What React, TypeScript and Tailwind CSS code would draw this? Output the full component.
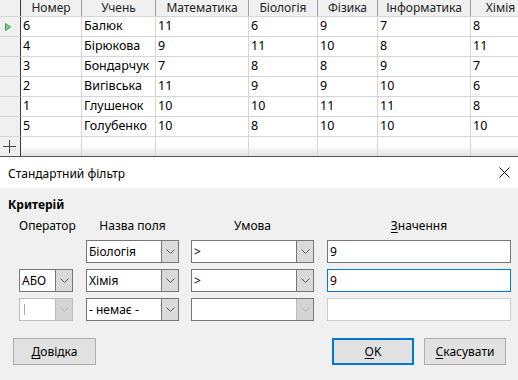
import React from "react"

const cols = [
  { name: "Номер", w: 61 },
  { name: "Учень", w: 74 },
  { name: "Математика", w: 93 },
  { name: "Біологія", w: 69 },
  { name: "Фізика", w: 60 },
  { name: "Інформатика", w: 93 },
  { name: "Хімія", w: 60 },
]

const rows = [
  ["6", "Балюк", "11", "6", "9", "7", "8"],
  ["4", "Бірюкова", "9", "11", "10", "8", "11"],
  ["3", "Бондарчук", "7", "8", "8", "9", "7"],
  ["2", "Вигівська", "11", "9", "9", "10", "6"],
  ["1", "Глушенок", "10", "10", "11", "11", "8"],
  ["5", "Голубенко", "10", "8", "10", "10", "10"],
]

function Chevron({ light }: { light?: boolean }) {
  return (
    <svg width="9" height="5" viewBox="0 0 9 5">
      <path d="M0.5 0.5 L4.5 4.5 L8.5 0.5" fill="none" stroke={light ? "#b5b5b5" : "#5a5a5a"} strokeWidth="1" />
    </svg>
  )
}

function Combo({ w, text, disabled, cursor, lightBorder }: { w: number; text?: string; disabled?: boolean; cursor?: boolean; lightBorder?: boolean }) {
  return (
    <div
      className={`flex h-[23px] bg-white border ${lightBorder ? "border-[#bcbcbc]" : "border-[#767676]"}`}
      style={{ width: w }}
    >
      <div className="flex-1 flex items-center pl-[2px] text-[12px] text-black whitespace-nowrap overflow-hidden">
        {cursor && <span className="ml-[2px] w-px h-[11px] bg-[#c89a9a]" />}
        {text}
      </div>
      <div
        className={`w-[17px] flex items-center justify-center border-l ${
          disabled ? "bg-[#d4d4d4] border-[#bcbcbc]" : "bg-[#dadada] border-[#767676]"
        }`}
      >
        <Chevron light={disabled} />
      </div>
    </div>
  )
}

function Field({ value, focused, disabled }: { value?: string; focused?: boolean; disabled?: boolean }) {
  return (
    <div
      className={`w-[184px] h-[23px] bg-white flex items-center pl-[2px] text-[12px] border ${
        focused ? "border-[#0078d7]" : disabled ? "border-[#cccccc]" : "border-[#767676]"
      }`}
    >
      {value}
    </div>
  )
}

function Btn({ w, first, rest, primary }: { w: number; first: string; rest: string; primary?: boolean }) {
  return (
    <div
      className={`h-[27px] flex items-center justify-center bg-[#e1e1e1] text-[12px] text-black ${
        primary ? "border-2 border-[#0078d7]" : "border border-[#adadad]"
      }`}
      style={{ width: w }}
    >
      <span className="underline underline-offset-2">{first}</span>
      {rest}
    </div>
  )
}

export default function App() {
  return (
    <div className="w-[518px] h-[380px] overflow-hidden bg-white flex flex-col" style={{ fontFamily: '"Noto Sans", "Open Sans", sans-serif' }}>
      {/* spreadsheet */}
      <div className="h-[157px] flex flex-col border-b border-[#555] shrink-0">
        <div className="flex h-[17px] bg-[#f0f0f0] border-b border-[#d6d6d6]">
          <div className="w-[21px] shrink-0 border-r border-[#3a3a3a]" />
          {cols.map((c) => (
            <div
              key={c.name}
              className="shrink-0 flex items-center justify-center text-[12px] text-[#222] border-r border-[#a0a0a0]"
              style={{ width: c.w }}
            >
              {c.name}
            </div>
          ))}
        </div>
        {rows.map((r, i) => (
          <div key={i} className="flex h-[20px]">
            <div className="w-[21px] shrink-0 bg-[#f0f0f0] border-r border-[#3a3a3a] border-b border-b-[#d6d6d6] flex items-center justify-center">
              {i === 0 && (
                <svg width="6" height="8" viewBox="0 0 6 8" className="-ml-[4px]">
                  <path d="M0.5 0.5 L5.5 4 L0.5 7.5 Z" fill="#7fd08a" stroke="#3f9f55" strokeWidth="1" />
                </svg>
              )}
            </div>
            {r.map((v, j) => (
              <div
                key={j}
                className="shrink-0 flex items-center pl-[2px] text-[12.5px] text-black border-r border-b border-[#d6d6d6] whitespace-nowrap overflow-hidden"
                style={{ width: cols[j].w }}
              >
                {v}
              </div>
            ))}
          </div>
        ))}
        <div className="flex flex-1">
          <div className="w-[21px] shrink-0 bg-[#f0f0f0] border-r border-[#3a3a3a] flex items-center justify-center">
            <svg width="13" height="13" viewBox="0 0 13 13" className="-ml-[2px]">
              <path d="M6.5 0 V13 M0 6.5 H13" stroke="#444" strokeWidth="1" />
            </svg>
          </div>
          {cols.map((c) => (
            <div
              key={c.name}
              className="shrink-0 border-r border-[#d6d6d6] bg-linear-to-b from-white from-45% to-[#e3e3e3]"
              style={{ width: c.w }}
            />
          ))}
        </div>
      </div>

      {/* dialog title */}
      <div className="h-[31px] shrink-0 bg-white flex items-center justify-between pl-[8px] pr-[8px] text-[12px] text-black">
        <span className="mt-[2px]">Стандартний фільтр</span>
        <svg width="11" height="11" viewBox="0 0 11 11">
          <path d="M0.5 0.5 L10.5 10.5 M10.5 0.5 L0.5 10.5" stroke="#111" strokeWidth="1" />
        </svg>
      </div>

      {/* dialog body */}
      <div className="flex-1 bg-[#f0f0f0] flex flex-col text-[12px] text-black">
        <div className="pl-[8px] pt-[9px] h-[25px] font-bold leading-[16px]">Критерій</div>
        <div className="flex pl-[19px] mt-[5px] h-[16px] leading-[16px]">
          <div className="w-[54px] text-center">Оператор</div>
          <div className="w-[93px] ml-[13px] text-center">Назва поля</div>
          <div className="w-[123px] ml-[12px] text-center">Умова</div>
          <div className="w-[184px] ml-[13px] text-center">
            <span className="underline underline-offset-2">З</span>начення
          </div>
        </div>
        <div className="flex flex-col gap-[6px] mt-[6px] pl-[19px]">
          <div className="flex">
            <div className="w-[54px]" />
            <div className="ml-[13px]"><Combo w={93} text="Біологія" /></div>
            <div className="ml-[12px]"><Combo w={123} text=">" /></div>
            <div className="ml-[13px]"><Field value="9" /></div>
          </div>
          <div className="flex">
            <Combo w={54} text="АБО" />
            <div className="ml-[13px]"><Combo w={93} text="Хімія" /></div>
            <div className="ml-[12px]"><Combo w={123} text=">" /></div>
            <div className="ml-[13px]"><Field value="9" focused /></div>
          </div>
          <div className="flex">
            <Combo w={54} cursor disabled lightBorder />
            <div className="ml-[13px]"><Combo w={93} text="- немає -" /></div>
            <div className="ml-[12px]"><Combo w={123} disabled /></div>
            <div className="ml-[13px]"><Field disabled /></div>
          </div>
        </div>
        <div className="flex items-center mt-[17px] pl-[13px]">
          <Btn w={83} first="Д" rest="овідка" />
          <div className="ml-auto flex gap-[10px] pr-[12px]">
            <Btn w={82} first="O" rest="K" primary />
            <Btn w={82} first="С" rest="касувати" />
          </div>
        </div>
      </div>
    </div>
  )
}
